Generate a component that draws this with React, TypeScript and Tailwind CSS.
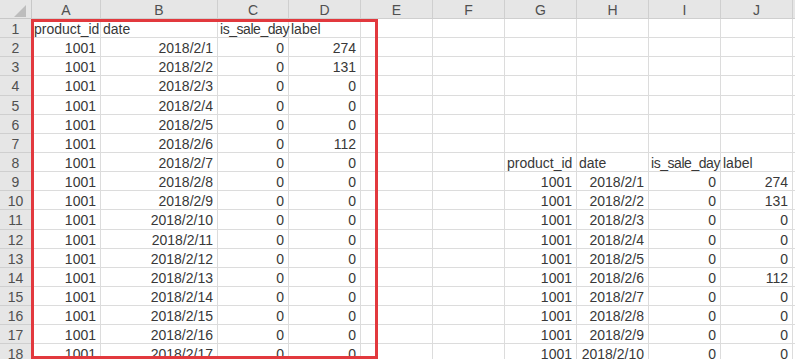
import React from "react";

const COLS = ["A", "B", "C", "D", "E", "F", "G", "H", "I", "J", "K"];
const WIDTHS = ["w-[69px]", "w-[117px]", "w-[71px]", "w-[72px]", "w-[72px]", "w-[72px]", "w-[72px]", "w-[72px]", "w-[72px]", "w-[72px]", "w-[72px]"];

type CellV = { t: string; a: "l" | "r"; cls?: string } | null;

function buildRows(): CellV[][] {
  const rows: CellV[][] = [];
  const leftLabels: Record<number, string> = { 2: "274", 3: "131", 7: "112" };
  const rightLabels: Record<number, string> = { 9: "274", 10: "131", 14: "112" };
  for (let r = 1; r <= 18; r++) {
    const row: CellV[] = new Array(11).fill(null);
    if (r === 1) {
      row[0] = { t: "product_id", a: "l" };
      row[1] = { t: "date", a: "l" };
      row[2] = { t: "is_sale_day", a: "l", cls: "tracking-[-0.45px]" };
      row[3] = { t: "label", a: "l" };
    } else {
      row[0] = { t: "1001", a: "r" };
      row[1] = { t: `2018/2/${r - 1}`, a: "r" };
      row[2] = { t: "0", a: "r" };
      row[3] = { t: leftLabels[r] ?? "0", a: "r" };
    }
    if (r === 8) {
      row[6] = { t: "product_id", a: "l" };
      row[7] = { t: "date", a: "l" };
      row[8] = { t: "is_sale_day", a: "l", cls: "tracking-[-0.45px]" };
      row[9] = { t: "label", a: "l" };
    } else if (r > 8) {
      row[6] = { t: "1001", a: "r" };
      row[7] = { t: `2018/2/${r - 8}`, a: "r" };
      row[8] = { t: "0", a: "r" };
      row[9] = { t: rightLabels[r] ?? "0", a: "r" };
    }
    rows.push(row);
  }
  return rows;
}

export default function App() {
  const rows = buildRows();
  return (
    <div
      className="relative w-[795px] h-[359px] overflow-hidden bg-white text-[14px] text-[#383838]"
      style={{ fontFamily: '"Liberation Sans", Arial, sans-serif' }}
    >
      {/* column header */}
      <div className="flex h-[19px] w-[900px] bg-[#e6e6e6]">
        <div className="relative w-[32px] shrink-0 border-r border-b border-[#c8c8c8]">
          <svg className="absolute left-[14px] top-[5px]" width="13" height="12" viewBox="0 0 13 12">
            <polygon points="12,0 12,12 0,12" fill="#bdbdbd" />
          </svg>
        </div>
        {COLS.map((c, i) => (
          <div
            key={c}
            className={`${WIDTHS[i]} shrink-0 border-r border-b border-[#cfcfcf] text-[#505050] flex items-center justify-center leading-none pt-[1px]`}
          >
            {c}
          </div>
        ))}
      </div>
      {rows.map((row, ri) => (
        <div key={ri} className="flex h-[19.15px] w-[900px]">
          <div className="w-[32px] shrink-0 bg-[#e6e6e6] border-r border-b border-[#cfcfcf] text-[#505050] flex items-center justify-center leading-none pt-[2px]">
            {ri + 1}
          </div>
          {row.map((cell, ci) => (
            <div
              key={ci}
              className={`${WIDTHS[ci]} shrink-0 border-r border-b border-[#dcdcdc] flex items-center whitespace-nowrap leading-none pt-[2px] ${
                cell && cell.a === "r" ? "justify-end pr-[4px]" : "justify-start pl-[2px]"
              }`}
            >
              {cell ? <span className={cell.cls ?? ""}>{cell.t}</span> : null}
            </div>
          ))}
        </div>
      ))}
      {/* highlight box */}
      <div className="absolute left-[31px] top-[19px] w-[347px] h-[340px] border-[3px] border-[#e2393e] pointer-events-none" />
    </div>
  );
}
